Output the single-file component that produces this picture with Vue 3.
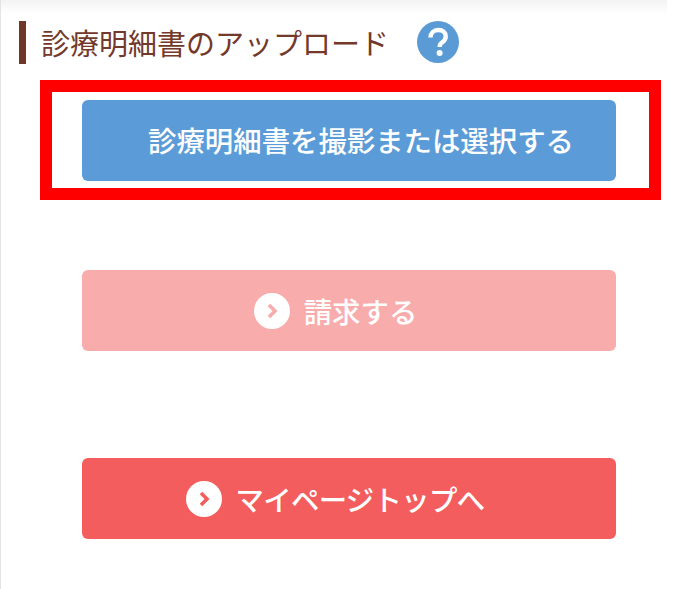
<script setup>
</script>

<template>
  <div class="page">
    <div class="topshade"></div>
    <div class="heading">
      <h2 class="title">診療明細書のアップロード</h2>
      <svg class="help" viewBox="0 0 42 42" aria-hidden="true">
        <circle cx="21" cy="21" r="21" fill="#5b9bd5" />
        <path d="M13.5 16.5c0-4.6 3.3-7.5 7.8-7.5 4.4 0 7.4 2.6 7.4 6.4 0 2.8-1.4 4.3-3.4 5.8-1.7 1.2-2.6 2.1-2.6 4.1v.7" fill="none" stroke="#fff" stroke-width="4.4" />
        <circle cx="22.6" cy="32" r="3" fill="#fff" />
      </svg>
    </div>
    <div class="highlight">
      <button class="btn blue">診療明細書を撮影または選択する</button>
    </div>
    <button class="btn pink second">
      <svg class="chev" viewBox="0 0 36 36" aria-hidden="true">
        <circle cx="18" cy="18" r="18" fill="#fff" />
        <path d="M15 12l6 6-6 6" fill="none" stroke="#f8acac" stroke-width="3.6" />
      </svg>
      <span>請求する</span>
    </button>
    <button class="btn red third">
      <svg class="chev" viewBox="0 0 36 36" aria-hidden="true">
        <circle cx="18" cy="18" r="18" fill="#fff" />
        <path d="M15 12l6 6-6 6" fill="none" stroke="#f35d5d" stroke-width="3.6" />
      </svg>
      <span class="tight">マイページトップへ</span>
    </button>
  </div>
</template>

<style>
html, body { margin: 0; background: #fff; }
</style>

<style scoped>
.page {
  position: relative;
  box-sizing: border-box;
  width: 697px;
  height: 589px;
  overflow: hidden;
  background: #fff;
  border-left: 1px solid #e3e3e3;
  padding: 21px 0 0 18px;
  font-family: "Noto Sans CJK JP", "Noto Sans", sans-serif;
}
.topshade {
  position: absolute;
  left: 0;
  right: 30px;
  top: 0;
  height: 14px;
  background: linear-gradient(#f3f3f3, #fff);
}
.heading {
  display: flex;
  align-items: flex-start;
  height: 43px;
  border-left: 7px solid #6f3826;
  padding-left: 15px;
}
.title {
  margin: 0;
  font-size: 29px;
  font-weight: 400;
  line-height: 43px;
  color: #73392a;
  white-space: nowrap;
}
.help {
  width: 42px;
  height: 42px;
  margin-left: 28px;
  flex: none;
}
.highlight {
  box-sizing: border-box;
  width: 621px;
  height: 120px;
  margin: 16px 0 0 21px;
  border: 12px solid #f00;
  padding: 8px 0 0 30px;
}
.btn {
  display: flex;
  align-items: center;
  justify-content: center;
  box-sizing: border-box;
  width: 534px;
  height: 81px;
  border: 0;
  border-radius: 6px;
  padding: 0;
  color: #fff;
  font-family: inherit;
  font-size: 28.4px;
  font-weight: 500;
}
.blue {
  background: #5b9bd7;
  padding: 0 0 2px 24px;
}
.pink {
  background: #f8acac;
  gap: 14px;
  padding-right: 27px;
}
.red {
  background: #f35d5d;
  gap: 13px;
  padding-right: 27px;
}
.tight {
  letter-spacing: -0.65px;
}
.second {
  margin: 70px 0 0 63px;
}
.third {
  margin: 107px 0 0 63px;
}
.chev {
  width: 36px;
  height: 36px;
  flex: none;
}
</style>
